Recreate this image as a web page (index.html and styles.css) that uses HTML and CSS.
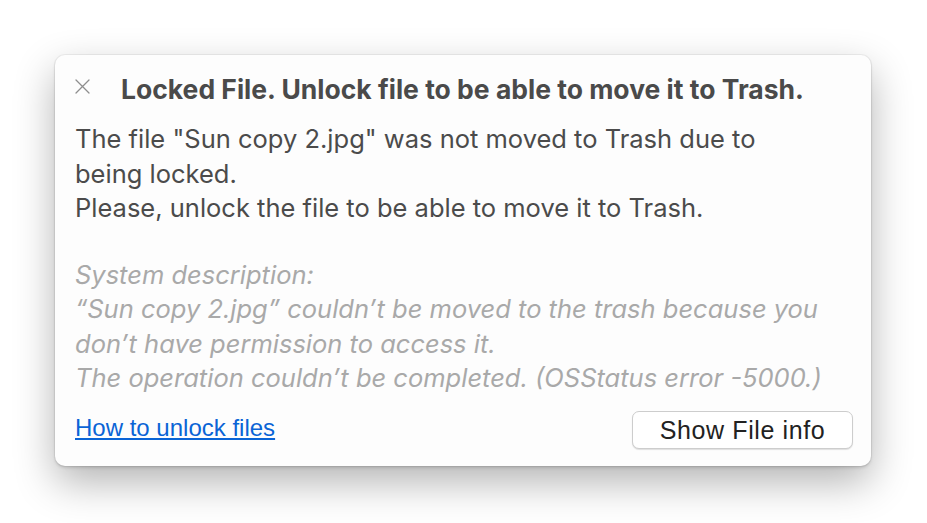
FILE: index.html
```html
<!DOCTYPE html>
<html lang="en">
<head>
<meta charset="utf-8">
<title>Locked File</title>
<link rel="stylesheet" href="styles.css">
</head>
<body>
<div class="dialog">
  <div class="header">
    <svg class="close" width="15" height="15" viewBox="0 0 15 15" aria-hidden="true">
      <path d="M1 1 L14 14 M14 1 L1 14" stroke="#8e8e8e" stroke-width="1.3" fill="none" stroke-linecap="round"/>
    </svg>
    <h1 class="title">Locked File. Unlock file to be able to move it to Trash.</h1>
  </div>
  <p class="message">The file "Sun copy 2.jpg" was not moved to Trash due to<br>being locked.<br>Please, unlock the file to be able to move it to Trash.</p>
  <p class="system">System description:<br>“Sun copy 2.jpg” couldn’t be moved to the trash because you<br>don’t have permission to access it.<br>The operation couldn’t be completed. (OSStatus error -5000.)</p>
  <div class="footer">
    <a class="link" href="#">How to unlock files</a>
    <button class="btn" type="button">Show File info</button>
  </div>
</div>
</body>
</html>
```
FILE: styles.css
```css
html, body {
  margin: 0;
  padding: 0;
  background: #ffffff;
}
body {
  box-sizing: border-box;
  min-height: 523px;
  padding: 55px 0 57px 55px;
  font-family: "Inter", "Noto Sans", sans-serif;
}
.dialog {
  width: 816px;
  height: 411px;
  box-sizing: border-box;
  padding: 18px 18px 17px 20px;
  background: #fdfdfd;
  border-radius: 10px;
  box-shadow: 0 0 0 1px rgba(0,0,0,0.05), 0 2px 3px rgba(0,0,0,0.12), 0 16px 40px rgba(0,0,0,0.3);
  display: flex;
  flex-direction: column;
}
.header {
  display: flex;
  align-items: flex-start;
  gap: 31px;
  height: 32px;
}
.close {
  flex: none;
  margin-top: 6px;
}
.title {
  margin: 0;
  font-size: 26.5px;
  line-height: 32px;
  font-weight: 700;
  color: #4a4a4a;
  white-space: nowrap;
}
.message {
  margin: 17px 0 0;
  font-size: 25.5px;
  line-height: 34.5px;
  color: #4b4b4b;
  white-space: nowrap;
}
.system {
  margin: 32px 0 0;
  font-size: 25.5px;
  line-height: 34.5px;
  font-style: italic;
  color: #a9a9a9;
  white-space: nowrap;
}
.footer {
  margin-top: auto;
  display: flex;
  justify-content: space-between;
  align-items: flex-start;
}
.link {
  margin-top: 3px;
  font-family: "Liberation Sans", Arial, sans-serif;
  font-size: 24px;
  line-height: 28px;
  color: #0a64d6;
  text-decoration: underline;
  text-underline-offset: 2px;
  text-decoration-thickness: 1.5px;
}
.btn {
  width: 221px;
  height: 38px;
  box-sizing: border-box;
  border: 1px solid #cdcdcd;
  border-radius: 7px;
  background: #ffffff;
  box-shadow: 0 1px 1px rgba(0,0,0,0.12);
  font-family: "Liberation Sans", Arial, sans-serif;
  font-size: 25px;
  letter-spacing: 0.6px;
  color: #222222;
  padding: 0;
  line-height: 36px;
}
```
